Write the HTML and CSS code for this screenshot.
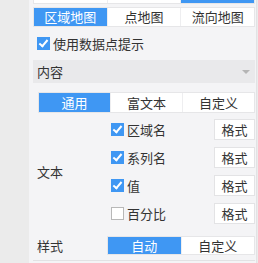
FILE: index.html
```html
<!DOCTYPE html>
<html lang="zh-CN">
<head>
    <meta charset="UTF-8">
    <title>数据点提示</title>
    <link rel="stylesheet" href="styles.css">
</head>
<body>
    <div class="gutter"></div>
    <div class="panel">
        <!-- map type tabs (previous row, cut off at top) -->
        <div class="seg seg-top">
            <span></span>
            <span></span>
            <span class="on"></span>
        </div>
        <div class="seg seg-map">
            <span class="on">区域地图</span>
            <span>点地图</span>
            <span>流向地图</span>
        </div>

        <label class="check-row">
            <span class="box checked"></span>使用数据点提示
        </label>

        <div class="section-head">
            <span>内容</span>
            <span class="caret"></span>
        </div>

        <div class="seg seg-content">
            <span class="on">通用</span>
            <span>富文本</span>
            <span>自定义</span>
        </div>

        <div class="form">
            <div class="form-label">文本</div>
            <div class="field-list">
                <div class="field">
                    <span class="box checked"></span><span class="name">区域名</span>
                    <button class="fmt">格式</button>
                </div>
                <div class="field">
                    <span class="box checked"></span><span class="name">系列名</span>
                    <button class="fmt">格式</button>
                </div>
                <div class="field">
                    <span class="box checked"></span><span class="name">值</span>
                    <button class="fmt">格式</button>
                </div>
                <div class="field">
                    <span class="box"></span><span class="name">百分比</span>
                    <button class="fmt">格式</button>
                </div>
            </div>

            <div class="form-label">样式</div>
            <div class="seg seg-style">
                <span class="on">自动</span>
                <span>自定义</span>
            </div>
        </div>
        <div class="bottom-line"></div>
    </div>
</body>
</html>
```

FILE: styles.css
```css
/* page */
body {
    margin: 0;
    display: flex;
    height: 263px;
    overflow: hidden;
    background-color: #ebebeb;
    font-family: "Noto Sans CJK SC", "Noto Sans", sans-serif;
    font-size: 13px;
    color: #333;
}

.gutter {
    width: 29px;
    flex: none;
}

.panel {
    width: 222px;
    padding: 0 1px 0 4px;
    background-color: #f4f4f6;
    border-right: 1px solid #e2e2e4;
    overflow: hidden;
}

/* segmented tabs */
.seg {
    display: flex;
    background-color: #fff;
    border: 1px solid #e6e6e8;
}

.seg span {
    flex: 1;
    text-align: center;
    line-height: 18px;
    height: 18px;
    white-space: nowrap;
}

.seg span + span {
    border-left: 1px solid #eeeef0;
}

.seg span.on {
    background-color: #3f97f3;
    color: #fff;
}

.seg-top {
    margin-top: -16px;
}

.seg-map {
    margin-top: 3px;
}

/* checkboxes */
.box {
    width: 11px;
    height: 11px;
    border: 1px solid #b8b8b8;
    background-color: #fff;
    margin-right: 3px;
    position: relative;
    flex: none;
}

.box.checked {
    background-color: #3f97f3;
    border-color: #3f97f3;
}

.box.checked::after {
    content: "";
    position: absolute;
    left: 3px;
    top: 0px;
    width: 3px;
    height: 7px;
    border: solid #fff;
    border-width: 0 2px 2px 0;
    transform: rotate(40deg);
}

.check-row {
    display: flex;
    align-items: center;
    height: 14px;
    margin: 9px 0 0 4px;
}

/* collapsible section header */
.section-head {
    display: flex;
    align-items: center;
    justify-content: space-between;
    height: 23px;
    margin-top: 10px;
    padding: 0 5px 0 4px;
    background-color: #e9e9eb;
}

.caret {
    width: 0;
    height: 0;
    border-left: 4px solid transparent;
    border-right: 4px solid transparent;
    border-top: 4px solid #b5b5b5;
}

.seg-content {
    margin: 9px 0 0 5px;
}

.seg-content span {
    line-height: 19px;
    height: 19px;
}

/* form rows */
.form {
    display: grid;
    grid-template-columns: 74px 1fr;
    row-gap: 12px;
    margin-top: 6px;
}

.form-label {
    display: flex;
    align-items: center;
    padding-left: 4px;
}

.field-list {
    display: flex;
    flex-direction: column;
    gap: 7px;
}

.field {
    display: flex;
    align-items: center;
    height: 21px;
    padding-left: 4px;
}

.field .name {
    flex: 1;
}

.fmt {
    width: 41px;
    height: 21px;
    padding: 0;
    background-color: #fff;
    border: 1px solid #e3e3e5;
    font-family: inherit;
    font-size: 13px;
    color: #333;
}

.seg-style span {
    line-height: 17px;
    height: 17px;
}

.bottom-line {
    margin-top: 5px;
    border-top: 1px solid #e2e2e4;
}
```
